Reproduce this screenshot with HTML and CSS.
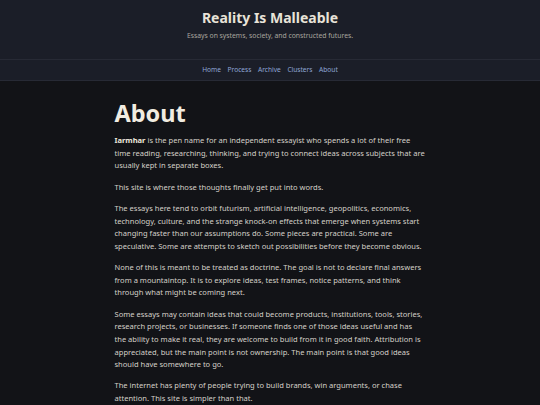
FILE: index.html
```html
<!DOCTYPE html>
<html lang="en">
<head>
<meta charset="utf-8">
<title>About — Reality Is Malleable</title>
<link rel="stylesheet" href="styles.css">
</head>
<body>
<header class="site-header">
  <h1 class="site-title">Reality Is Malleable</h1>
  <p class="site-tagline">Essays on systems, society, and constructed futures.</p>
</header>
<nav class="site-nav">
  <a href="#">Home</a>
  <a href="#">Process</a>
  <a href="#">Archive</a>
  <a href="#">Clusters</a>
  <a href="#">About</a>
</nav>
<main class="content">
  <h2 class="page-title">About</h2>
  <p><strong>Iarmhar</strong> is the pen name for an independent essayist who spends a lot of their free time reading, researching, thinking, and trying to connect ideas across subjects that are usually kept in separate boxes.</p>
  <p>This site is where those thoughts finally get put into words.</p>
  <p>The essays here tend to orbit futurism, artificial intelligence, geopolitics, economics, technology, culture, and the strange knock-on effects that emerge when systems start changing faster than our assumptions do. Some pieces are practical. Some are speculative. Some are attempts to sketch out possibilities before they become obvious.</p>
  <p>None of this is meant to be treated as doctrine. The goal is not to declare final answers from a mountaintop. It is to explore ideas, test frames, notice patterns, and think through what might be coming next.</p>
  <p>Some essays may contain ideas that could become products, institutions, tools, stories, research projects, or businesses. If someone finds one of those ideas useful and has the ability to make it real, they are welcome to build from it in good faith. Attribution is appreciated, but the main point is not ownership. The main point is that good ideas should have somewhere to go.</p>
  <p>The internet has plenty of people trying to build brands, win arguments, or chase attention. This site is simpler than that.</p>
</main>
</body>
</html>
```
FILE: styles.css
```css
html, body {
  margin: 0;
  padding: 0;
}
body {
  background: #121317;
  color: #d4d0c8;
  font-family: "Noto Sans", "Open Sans", sans-serif;
  font-size: 7.55px;
  line-height: 12.6px;
}
.site-header {
  background: #1b1e28;
  text-align: center;
  padding: 8px 0 18px;
  border-bottom: 1px solid #272a35;
}
.site-title {
  margin: 0;
  font-size: 14px;
  line-height: 20px;
  font-weight: 700;
  color: #e8e3d8;
}
.site-tagline {
  margin: 2px 0 0;
  font-size: 6.8px;
  line-height: 11px;
  color: #a9a69f;
}
.site-nav {
  background: #1b1e28;
  border-bottom: 1px solid #272a35;
  display: flex;
  justify-content: center;
  gap: 6.6px;
  padding: 5px 0;
  font-size: 6.6px;
  line-height: 10px;
}
.site-nav a {
  color: #8fa6d6;
  text-decoration: none;
}
.content {
  max-width: 311px;
  margin: 0 auto;
  padding: 20px 0 0;
}
.page-title {
  margin: 0 0 9px;
  font-size: 23.5px;
  line-height: 24px;
  font-weight: 700;
  color: #f1ece1;
}
.content p {
  margin: 0 0 8.8px;
}
.content strong {
  color: #ebe6dc;
}
```
